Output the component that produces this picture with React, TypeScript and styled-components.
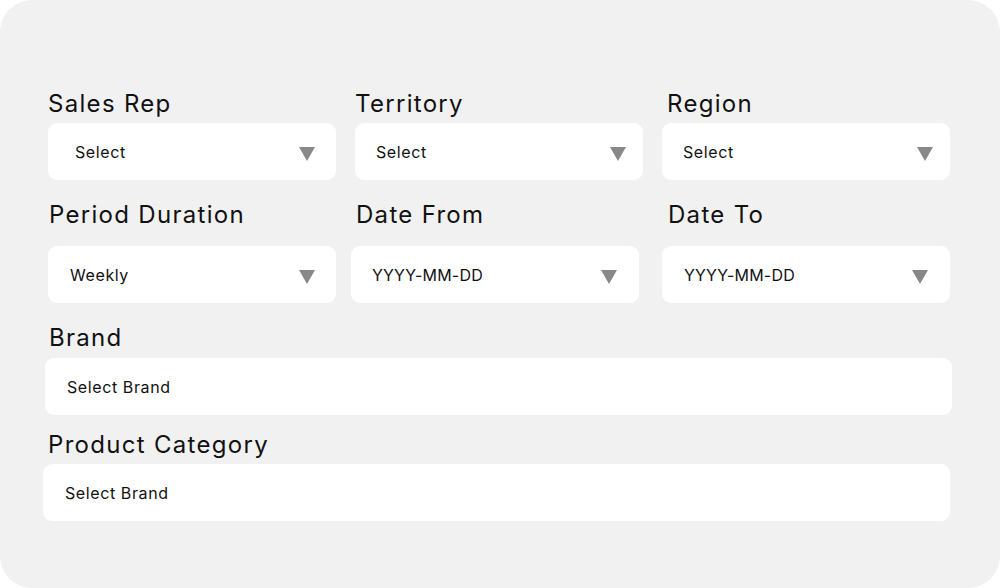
import * as React from 'react';
import styled, { createGlobalStyle } from 'styled-components';

const GlobalStyle = createGlobalStyle`
  html, body {
    margin: 0;
    padding: 0;
    background: #ffffff;
  }
  body {
    font-family: Inter, 'Noto Sans', sans-serif;
  }
`;

const Card = styled.div`
  width: 1000px;
  height: 588px;
  box-sizing: border-box;
  background: #f1f1f1;
  border-radius: 32px;
  padding: 89px 50px 0 43px;
  display: flex;
  flex-direction: column;
`;

const Row = styled.div<{ $top?: number }>`
  display: grid;
  grid-template-columns: 288px 288px 288px;
  column-gap: 19px;
  margin-top: ${(p) => p.$top ?? 0}px;
  padding-left: 5px;
`;

const Field = styled.div`
  display: flex;
  flex-direction: column;
`;

const Label = styled.div<{ $gap: number; $indent?: number }>`
  font-size: 24px;
  line-height: 30px;
  color: #111111;
  font-weight: 400;
  letter-spacing: 1.3px;
  margin-bottom: ${(p) => p.$gap}px;
  padding-left: ${(p) => p.$indent ?? 0}px;
`;

const Box = styled.div<{ $pad: number; $right?: number; $shift?: number; $tracking?: number }>`
  height: 57px;
  box-sizing: border-box;
  background: #ffffff;
  border-radius: 9px;
  display: flex;
  align-items: center;
  justify-content: space-between;
  padding: 0 ${(p) => p.$right ?? 21}px 0 ${(p) => p.$pad}px;
  margin-left: ${(p) => p.$shift ?? 0}px;
  margin-right: ${(p) => -(p.$shift ?? 0)}px;
  font-size: 16px;
  color: #111111;
  letter-spacing: ${(p) => p.$tracking ?? 0.6}px;
`;

const WideField = styled.div<{ $top: number; $shift: number }>`
  display: flex;
  flex-direction: column;
  margin-top: ${(p) => p.$top}px;
  margin-left: ${(p) => p.$shift}px;
  width: 907px;
`;

const ArrowIcon = styled.svg`
  margin-top: 5px;
  flex-shrink: 0;
`;

const Arrow = () => (
  <ArrowIcon width="16" height="14" viewBox="0 0 16 14">
    <path d="M0 0 H16 L8 14 Z" fill="#888888" />
  </ArrowIcon>
);

export default function App() {
  return (
    <>
      <GlobalStyle />
      <Card>
        <Row>
          <Field>
            <Label $gap={4}>Sales Rep</Label>
            <Box $pad={27}>Select<Arrow /></Box>
          </Field>
          <Field>
            <Label $gap={4}>Territory</Label>
            <Box $pad={21} $right={17}>Select<Arrow /></Box>
          </Field>
          <Field>
            <Label $gap={4} $indent={5}>Region</Label>
            <Box $pad={21} $right={17}>Select<Arrow /></Box>
          </Field>
        </Row>
        <Row $top={20}>
          <Field>
            <Label $gap={16} $indent={1}>Period Duration</Label>
            <Box $pad={22}>Weekly<Arrow /></Box>
          </Field>
          <Field>
            <Label $gap={16} $indent={1}>Date From</Label>
            <Box $pad={21} $right={22} $shift={-4} $tracking={0.2}>YYYY-MM-DD<Arrow /></Box>
          </Field>
          <Field>
            <Label $gap={16} $indent={6}>Date To</Label>
            <Box $pad={22} $right={22} $tracking={0.2}>YYYY-MM-DD<Arrow /></Box>
          </Field>
        </Row>
        <WideField $top={20} $shift={2}>
          <Label $gap={5} $indent={4}>Brand</Label>
          <Box $pad={22}>Select Brand</Box>
        </WideField>
        <WideField $top={15} $shift={0}>
          <Label $gap={4} $indent={5}>Product Category</Label>
          <Box $pad={22}>Select Brand</Box>
        </WideField>
      </Card>
    </>
  );
}
